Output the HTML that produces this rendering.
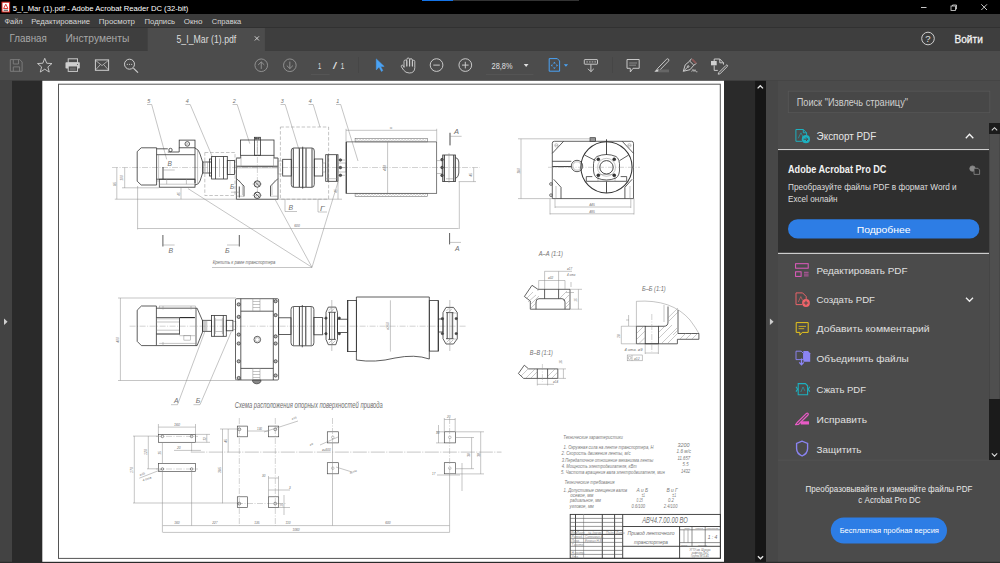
<!DOCTYPE html><html><head><meta charset="utf-8"><style>*{margin:0;padding:0}html,body{width:1000px;height:563px;overflow:hidden;background:#282828}</style></head><body><svg width="1000" height="563" viewBox="0 0 1000 563" style="position:absolute;left:0;top:0;font-family:'Liberation Sans',sans-serif"><rect x="0" y="0" width="1000" height="14" fill="#000" /><rect x="422" y="0" width="31" height="1" fill="#1473e6" /><rect x="453" y="0" width="126" height="1" fill="#333" /><rect x="0" y="14" width="1000" height="13" fill="#3b3b3b" /><rect x="0" y="27" width="1000" height="1" fill="#313131" /><rect x="0" y="28" width="1000" height="22.6" fill="#3e3e3e" /><rect x="0" y="50.6" width="1000" height="30.2" fill="#4c4c4c" /><rect x="147.7" y="28" width="117.2" height="23" fill="#4c4c4c" /><rect x="0" y="80.8" width="12" height="483" fill="#434343" /><rect x="12" y="80.8" width="30.3" height="483" fill="#2a2a2a" /><rect x="42.3" y="80.8" width="681.8" height="481.2" fill="#fff" /><rect x="724.1" y="80.8" width="31" height="483" fill="#2a2a2a" /><rect x="755.2" y="80.8" width="10.8" height="483" fill="#161616" /><rect x="766" y="80.8" width="12" height="483" fill="#474747" /><rect x="777.7" y="80.8" width="222.3" height="483" fill="#4b4b4b" /><g><rect x="2" y="2.2" width="7.6" height="9.8" fill="#fff" stroke="#d9271e" stroke-width="1"/><path d="M3.6 8.5 L5.8 4.2 L7.9 8.5 Z" fill="none" stroke="#d9271e" stroke-width="0.9"/><rect x="3.6" y="9.6" width="4.4" height="1.5" fill="#777"/></g><text x="12.8" y="10.7" font-size="8.1" fill="#fff" font-weight="400" text-anchor="start" textLength="175.5" lengthAdjust="spacingAndGlyphs">5_I_Mar (1).pdf - Adobe Acrobat Reader DC (32-bit)</text><path d="M921 7.5H926.5" stroke="#ddd" stroke-width="0.9"/><rect x="951" y="6" width="4.5" height="4.5" fill="none" stroke="#ddd" stroke-width="0.8"/><path d="M952.5 6V5H956.5V9H955.5" fill="none" stroke="#ddd" stroke-width="0.8"/><path d="M981.3 4.3L987 10M987 4.3L981.3 10" stroke="#ddd" stroke-width="0.9"/><text x="4.5" y="24" font-size="7.9" fill="#d6d6d6" font-weight="400" text-anchor="start" textLength="18.0" lengthAdjust="spacingAndGlyphs">Файл</text><text x="31.3" y="24" font-size="7.9" fill="#d6d6d6" font-weight="400" text-anchor="start" textLength="58.7" lengthAdjust="spacingAndGlyphs">Редактирование</text><text x="98.8" y="24" font-size="7.9" fill="#d6d6d6" font-weight="400" text-anchor="start" textLength="36.2" lengthAdjust="spacingAndGlyphs">Просмотр</text><text x="144.5" y="24" font-size="7.9" fill="#d6d6d6" font-weight="400" text-anchor="start" textLength="30.5" lengthAdjust="spacingAndGlyphs">Подпись</text><text x="183.8" y="24" font-size="7.9" fill="#d6d6d6" font-weight="400" text-anchor="start" textLength="18.7" lengthAdjust="spacingAndGlyphs">Окно</text><text x="211.8" y="24" font-size="7.9" fill="#d6d6d6" font-weight="400" text-anchor="start" textLength="29.5" lengthAdjust="spacingAndGlyphs">Справка</text><text x="9.5" y="42" font-size="11" fill="#a8a8a8" font-weight="400" text-anchor="start" textLength="37.3" lengthAdjust="spacingAndGlyphs">Главная</text><text x="65.5" y="42" font-size="11" fill="#a8a8a8" font-weight="400" text-anchor="start" textLength="63.8" lengthAdjust="spacingAndGlyphs">Инструменты</text><text x="176.5" y="42.8" font-size="10.9" fill="#dcdcdc" font-weight="400" text-anchor="start" textLength="59.8" lengthAdjust="spacingAndGlyphs">5_I_Mar (1).pdf</text><path d="M254.8 36.3L259 40.5M259 36.3L254.8 40.5" stroke="#ddd" stroke-width="0.9"/><circle cx="928" cy="38.5" r="6.3" fill="none" stroke="#ddd" stroke-width="0.9"/><text x="928" y="42" font-size="9.5" fill="#e0e0e0" font-weight="400" text-anchor="middle">?</text><text x="954.5" y="43" font-size="10.9" fill="#f2f2f2" stroke="#f2f2f2" stroke-width="0.3" textLength="28.3" lengthAdjust="spacingAndGlyphs">Войти</text><g fill="none" stroke="#7d7d7d" stroke-width="0.95"><path d="M10.3 59.6H19.8L22.1 62V71.3H10.3Z"/><path d="M13.3 59.6V64H18.5V59.6"/><path d="M13.3 71.3V66.9H19.6V71.3"/></g><polygon points="44.75,58.30 46.69,63.23 51.98,63.55 47.89,66.92 49.22,72.05 44.75,69.20 40.28,72.05 41.61,66.92 37.52,63.55 42.81,63.23" fill="none" stroke="#cfcfcf" stroke-width="0.9" stroke-linejoin="round"/><g fill="none" stroke="#cfcfcf" stroke-width="0.95"><rect x="68.2" y="58.8" width="9.3" height="4.2"/><rect x="65.5" y="62.3" width="14.3" height="6.3" fill="#cfcfcf" stroke="none" rx="0.8"/><rect x="68.2" y="66" width="9.3" height="5.4" fill="#4a4a4a"/><path d="M70 68.2H75.8M70 69.8H75.8" stroke-width="0.6" stroke="#999"/></g><circle cx="77.5" cy="64.4" r="0.5" fill="#4a4a4a"/><g fill="none" stroke="#cfcfcf" stroke-width="1"><rect x="95.4" y="59.9" width="13.2" height="10.4"/><path d="M95.6 60.4L102 65.6L108.4 60.4M95.6 69.9L100.4 64.5M108.4 69.9L103.6 64.5" stroke-width="0.7"/></g><g fill="none" stroke="#cfcfcf" stroke-width="1"><circle cx="129.5" cy="64.2" r="5"/><path d="M133.4 68.1L138 72.6" stroke-width="1.2"/></g><g fill="#cfcfcf"><circle cx="127.3" cy="64.3" r="0.6"/><circle cx="129.5" cy="64.3" r="0.6"/><circle cx="131.7" cy="64.3" r="0.6"/></g><g fill="none" stroke="#9c9c9c" stroke-width="0.85"><circle cx="261.25" cy="65.25" r="6.3"/><path d="M261.25 68.9V62M258.2 64.9L261.25 61.9L264.3 64.9"/><circle cx="289.85" cy="65.25" r="6.3"/><path d="M289.85 61.6V68.5M286.8 65.6L289.85 68.6L292.9 65.6"/></g><text x="318" y="69" font-size="8.2" fill="#e0e0e0" font-weight="400" text-anchor="start" textLength="3.2" lengthAdjust="spacingAndGlyphs">1</text><text x="332.8" y="69" font-size="8.2" fill="#e0e0e0" font-weight="400" text-anchor="start" textLength="4.3" lengthAdjust="spacingAndGlyphs">/</text><text x="340.8" y="69" font-size="8.2" fill="#e0e0e0" font-weight="400" text-anchor="start" textLength="3.5" lengthAdjust="spacingAndGlyphs">1</text><rect x="311" y="74" width="18.6" height="0.6" fill="#5c5c5c"/><rect x="358" y="57" width="0.7" height="16" fill="#444"/><path d="M376.3 58.9L376.3 69.9L379 67L381.5 71.5L382.8 70.6L380.6 66.4L384.2 66.4Z" fill="#4aa3f5" stroke="#4aa3f5" stroke-width="0.5" stroke-linejoin="round"/><g fill="none" stroke="#cfcfcf" stroke-width="0.9" stroke-linejoin="round" stroke-linecap="round"><path d="M404 67V61.5Q404 60 405.4 60Q406.8 60 406.8 61.5V66M406.8 66V59.5Q406.8 58 408.2 58Q409.6 58 409.6 59.5V66M409.6 66V60Q409.6 58.7 411 58.7Q412.4 58.7 412.4 60V66M412.4 66V61.5Q412.4 60.3 413.6 60.3Q414.8 60.3 414.8 61.5V67.5Q414.8 73 409.3 73Q405.6 73 403.5 70L401.4 66.8Q400.8 65.6 401.8 65.2Q402.8 64.9 403.6 66L404 67"/></g><g fill="none" stroke="#cfcfcf" stroke-width="0.95"><circle cx="436.55" cy="65.07" r="6.35"/><path d="M433.3 65.1H439.8"/><circle cx="465.3" cy="65.07" r="6.35"/><path d="M462 65.1H468.6M465.3 61.8V68.4"/></g><text x="491.6" y="69" font-size="8.3" fill="#e0e0e0" font-weight="400" text-anchor="start" textLength="20.9" lengthAdjust="spacingAndGlyphs">28,8%</text><path d="M523.8 64.1H528.5L526.15 66.9Z" fill="#e0e0e0"/><rect x="486" y="74" width="47.4" height="0.6" fill="#5a5a5a"/><g fill="none" stroke="#4aa3f5" stroke-width="1"><path d="M549.2 58.6H557.3L559.6 61V71.2H549.2Z"/></g><g fill="#4aa3f5"><path d="M554.4 61.8L555.8 63.4H553Z"/><path d="M554.4 69L555.8 67.4H553Z"/><path d="M550.8 65.4L552.4 64V66.8Z"/><path d="M558 65.4L556.4 64V66.8Z"/></g><path d="M563.8 64.2H568.1L565.95 66.8Z" fill="#4aa3f5"/><g fill="none" stroke="#cfcfcf" stroke-width="0.95"><rect x="584.3" y="59.6" width="13.2" height="4.6" rx="0.5"/><path d="M590.9 64.5V71.5M588 68.8L590.9 71.7L593.8 68.8"/></g><g fill="#9a9a9a"><rect x="586.3" y="61.2" width="1.6" height="1.4"/><rect x="589" y="61.2" width="1.6" height="1.4"/><rect x="591.7" y="61.2" width="1.6" height="1.4"/><rect x="594.4" y="61.2" width="1.6" height="1.4"/></g><rect x="612" y="57" width="0.7" height="16" fill="#444"/><g fill="none" stroke="#cfcfcf" stroke-width="0.95" stroke-linejoin="round"><path d="M627 59.5H639.2V68.3H633L630.3 72V68.3H627Z"/><path d="M629.2 63H637M629.2 65.2H636" stroke="#9a9a9a" stroke-width="0.8"/></g><g fill="none" stroke="#cfcfcf" stroke-width="0.95" stroke-linejoin="round"><path d="M657.3 68.8L666.6 59.2Q667.6 58.3 668.5 59.2Q669.4 60.1 668.5 61.1L659.3 70.6Z"/></g><path d="M656.8 69L659.2 71.3L657.4 71.8H654.4Z" fill="#cfcfcf"/><rect x="658.5" y="69.5" width="10.5" height="2.8" fill="#666"/><g fill="none" stroke="#cfcfcf" stroke-width="0.95" stroke-linejoin="round"><path d="M683.3 71.3L685.2 64.9L689.7 61.1L693.8 65.2L690 69.7Z"/><path d="M689.7 61.1L691.4 58.6M693.8 65.2L696.5 63.3M683.5 71.2L687.7 67"/><circle cx="688.2" cy="66.5" r="0.8"/></g><path d="M691.5 60L692.8 58.4L696.6 62.6L695.2 63.8Z" fill="#8a5555"/><path d="M691.6 71.8L693 69.3L694 71.5L695 69.6L696 71.8H697.5" fill="none" stroke="#cfcfcf" stroke-width="0.7"/><g fill="none" stroke="#cfcfcf" stroke-width="0.95" stroke-linejoin="round"><path d="M714.2 61.2V59H719.8L723.5 62.8V64.6M714.2 65.4V70.4H717.8"/><path d="M719.8 59V62.8H723.5"/><path d="M718.6 72.8L726 65.4Q726.8 64.6 727.4 65.2Q728 65.8 727.2 66.6L719.9 73.9L718.2 74.2Z"/></g><rect x="711" y="61" width="5.7" height="4.3" fill="#cfcfcf"/><rect x="788.3" y="91.2" width="201.5" height="21.5" fill="#474747" stroke="#585858" stroke-width="0.8"/><text x="796.7" y="106.1" font-size="10.3" fill="#cfcfcf" font-weight="400" text-anchor="start" textLength="111.3" lengthAdjust="spacingAndGlyphs">Поиск &quot;Извлечь страницу&quot;</text><g fill="none" stroke="#1db0bf" stroke-width="1"><path d="M795.9 129.5H803.3L806.6 132.8V135.6M803.3 129.5V132.8H806.6M802 141.3H795.9V129.5"/><path d="M798.2 138.3L801 132.8L803.2 137.2" stroke-width="0.6"/></g><circle cx="805.9" cy="139.2" r="4.1" fill="#1db0bf"/><path d="M803.6 139.2H807.6M806 137.4L807.8 139.2L806 141" fill="none" stroke="#4a4a4a" stroke-width="1"/><text x="816.6" y="139.8" font-size="11.3" fill="#e6e6e6" font-weight="400" text-anchor="start" textLength="59.7" lengthAdjust="spacingAndGlyphs">Экспорт PDF</text><path d="M965.8 138.3L969.5 134.3L973.3 138.3" fill="none" stroke="#f4f4f4" stroke-width="1.3"/><rect x="778" y="149" width="211" height="1.2" fill="#cfcfcf" /><rect x="778" y="150.2" width="211" height="103" fill="#2f2f2f" /><text x="788" y="172.9" font-size="10.6" fill="#f2f2f2" font-weight="700" text-anchor="start" textLength="98.4" lengthAdjust="spacingAndGlyphs">Adobe Acrobat Pro DC</text><g fill="none" stroke="#8a8a8a" stroke-width="0.8"><circle cx="972.5" cy="168.6" r="2.7" fill="#8a8a8a"/><path d="M974 168.3H978L979.6 170V174.4H974Z" fill="#2e2e2e"/></g><text x="788" y="190.3" font-size="9" fill="#dedede" font-weight="400" text-anchor="start" textLength="168.7" lengthAdjust="spacingAndGlyphs">Преобразуйте файлы PDF в формат Word и</text><text x="788" y="201.5" font-size="9" fill="#dedede" font-weight="400" text-anchor="start" textLength="49.5" lengthAdjust="spacingAndGlyphs">Excel онлайн</text><rect x="788" y="219.3" width="191.4" height="19.2" rx="9.6" fill="#2d7de5"/><text x="856.7" y="232.5" font-size="9.6" fill="#fff" font-weight="400" text-anchor="start" textLength="53.9" lengthAdjust="spacingAndGlyphs">Подробнее</text><rect x="778" y="252.8" width="211" height="1.2" fill="#cdcdcd" /><text x="816.6" y="274.4" font-size="9.7" fill="#e0e0e0" font-weight="400" text-anchor="start" textLength="90.9" lengthAdjust="spacingAndGlyphs">Редактировать PDF</text><text x="816.6" y="303.09999999999997" font-size="9.7" fill="#e0e0e0" font-weight="400" text-anchor="start" textLength="58.4" lengthAdjust="spacingAndGlyphs">Создать PDF</text><text x="816.6" y="332.4" font-size="9.7" fill="#e0e0e0" font-weight="400" text-anchor="start" textLength="113.0" lengthAdjust="spacingAndGlyphs">Добавить комментарий</text><text x="816.6" y="362.4" font-size="9.7" fill="#e0e0e0" font-weight="400" text-anchor="start" textLength="92.1" lengthAdjust="spacingAndGlyphs">Объединить файлы</text><text x="816.6" y="393.0" font-size="9.7" fill="#e0e0e0" font-weight="400" text-anchor="start" textLength="49.4" lengthAdjust="spacingAndGlyphs">Сжать PDF</text><text x="816.6" y="423.0" font-size="9.7" fill="#e0e0e0" font-weight="400" text-anchor="start" textLength="50.4" lengthAdjust="spacingAndGlyphs">Исправить</text><text x="816.6" y="452.9" font-size="9.7" fill="#e0e0e0" font-weight="400" text-anchor="start" textLength="44.9" lengthAdjust="spacingAndGlyphs">Защитить</text><g fill="none" stroke="#e85bc5" stroke-width="0.95"><rect x="795.6" y="263.7" width="12.6" height="4.5"/><rect x="795.6" y="271.8" width="5.5" height="4.6"/><path d="M804 272.3H808.6M804 274.1H808.6M804 275.9H808.6" stroke-width="0.7"/></g><g fill="none" stroke="#f0646a" stroke-width="0.95"><path d="M802 304.6H796V292.9H802.6L806.2 296.5V299"/><path d="M798.3 302L800.8 296.6L802.6 300.4" stroke-width="0.6"/></g><circle cx="806" cy="303" r="3.9" fill="#f0646a"/><path d="M803.8 303H808.2M806 300.8V305.2" stroke="#4a4a4a" stroke-width="1"/><path d="M966 297.7L969.5 301.3L973 297.7" fill="none" stroke="#eeeeee" stroke-width="1.3"/><g fill="none" stroke="#e8c51c" stroke-width="1" stroke-linejoin="round"><path d="M796.2 322.6H808.2V332.4H802.2L799.9 335.2V332.4H796.2Z"/><path d="M798.6 326.4H806M798.6 328.7H804.2" stroke-width="0.8"/></g><g><path d="M796 351.2H801.2L803.6 353.6V359.6H796Z" fill="none" stroke="#8b84f3" stroke-width="0.95"/><path d="M803.4 351H808L810.2 353.2V361.8H803.4Z" fill="#8b84f3"/><path d="M801.5 358.4V364.6M799.2 362.4L801.5 364.8L803.8 362.4" fill="none" stroke="#8b84f3" stroke-width="1.3"/></g><g fill="none" stroke="#1db0bf" stroke-width="1.1"><path d="M798.2 383.6H805.4L807.6 385.8V394.8H798.2Z"/><path d="M796 386.8L797.6 389.2L796 391.6M809.8 386.8L808.2 389.2L809.8 391.6"/><path d="M800.8 392L803 387L804.8 390.8" stroke-width="0.6"/></g><g fill="none" stroke="#e85bc5" stroke-width="1.25" stroke-linejoin="round"><path d="M797 422.8L806.2 413.6Q807.2 412.6 808 413.4Q808.8 414.2 807.8 415.2L798.6 424.3L795.6 424.6Z"/></g><rect x="800.8" y="421.3" width="8.2" height="3.2" fill="#e85bc5"/><path d="M802.1 441.2L796.6 443.4V448.6Q796.8 453.8 802.1 456Q807.4 453.8 807.6 448.6V443.4Z" fill="none" stroke="#8b84f3" stroke-width="1.35"/><rect x="778" y="459.7" width="211" height="0.8" fill="#555" /><rect x="989" y="123" width="11" height="337" fill="#4f4f4f" /><rect x="989" y="134" width="0.8" height="265" fill="#434343" /><rect x="999.2" y="134" width="0.8" height="265" fill="#454545" /><rect x="989" y="123" width="11" height="11" fill="#1b1b1b" /><path d="M991.8 130.4L994.5 127.7L997.2 130.4" fill="none" stroke="#d8d8d8" stroke-width="1.1"/><rect x="989" y="399" width="11" height="61" fill="#1b1b1b" /><path d="M991.8 453.4L994.5 456.1L997.2 453.4" fill="none" stroke="#d8d8d8" stroke-width="1.1"/><text x="889" y="492" font-size="8.3" fill="#e8e8e8" font-weight="400" text-anchor="middle" textLength="166.9" lengthAdjust="spacingAndGlyphs">Преобразовывайте и изменяйте файлы PDF</text><text x="889.5" y="502.5" font-size="8.3" fill="#e8e8e8" font-weight="400" text-anchor="middle" textLength="62.3" lengthAdjust="spacingAndGlyphs">с Acrobat Pro DC</text><rect x="830.8" y="517.5" width="116.2" height="26" rx="13" fill="#2d7de5"/><text x="889.3" y="533.4" font-size="8" fill="#fff" font-weight="400" text-anchor="middle" textLength="99.3" lengthAdjust="spacingAndGlyphs">Бесплатная пробная версия</text><path d="M4 318.6L7.6 321.8L4 325Z" fill="#cfcfcf"/><path d="M769.9 318.6L773.6 321.8L769.9 325Z" fill="#cfcfcf"/><path d="M757.6 88.4L760.3 85.7L763 88.4" fill="none" stroke="#e8e8e8" stroke-width="1.3"/><path d="M757.9 556.2L760.5 558.8L763.1 556.2" fill="none" stroke="#e8e8e8" stroke-width="1.3"/><rect x="0" y="561.8" width="1000" height="1.2" fill="#2b2b2b" /><g font-family="Liberation Sans, sans-serif"><rect x="58.50" y="84.20" width="661.80" height="474.20" stroke="#555" stroke-width="1" fill="none" /><path d="M112.00 167.50 L480.00 167.50" stroke="#9a9a9a" stroke-width="0.45" fill="none" stroke-dasharray="6 1.5 1 1.5"/><text x="147.2" y="102.8" font-size="6.2" fill="#6e6e6e" text-anchor="start" font-style="italic" textLength="3" lengthAdjust="spacingAndGlyphs">5</text><path d="M147.00 104.50 L151.70 104.50 L166.70 159.40" stroke="#8a8a8a" stroke-width="0.5" fill="none"/><text x="185.7" y="102.8" font-size="6.2" fill="#6e6e6e" text-anchor="start" font-style="italic" textLength="3" lengthAdjust="spacingAndGlyphs">4</text><path d="M185.50 104.50 L190.20 104.50 L212.60 157.40" stroke="#8a8a8a" stroke-width="0.5" fill="none"/><text x="232.7" y="102.8" font-size="6.2" fill="#6e6e6e" text-anchor="start" font-style="italic" textLength="3" lengthAdjust="spacingAndGlyphs">2</text><path d="M232.50 104.50 L237.20 104.50 L249.80 143.70" stroke="#8a8a8a" stroke-width="0.5" fill="none"/><text x="280.7" y="102.8" font-size="6.2" fill="#6e6e6e" text-anchor="start" font-style="italic" textLength="3" lengthAdjust="spacingAndGlyphs">3</text><path d="M280.50 104.50 L285.20 104.50 L298.60 148.60" stroke="#8a8a8a" stroke-width="0.5" fill="none"/><text x="308.7" y="102.8" font-size="6.2" fill="#6e6e6e" text-anchor="start" font-style="italic" textLength="3" lengthAdjust="spacingAndGlyphs">4</text><path d="M308.50 104.50 L313.20 104.50 L320.00 127.00" stroke="#8a8a8a" stroke-width="0.5" fill="none"/><text x="336.2" y="102.8" font-size="6.2" fill="#6e6e6e" text-anchor="start" font-style="italic" textLength="3" lengthAdjust="spacingAndGlyphs">1</text><path d="M336.00 104.50 L340.70 104.50 L358.00 161.00" stroke="#8a8a8a" stroke-width="0.5" fill="none"/><path d="M156.6 147.8H141.2L137.2 151.6V181.2L141.2 185H156.6Z" stroke="#353535" stroke-width="0.8" fill="none"/><path d="M156.60 154.70 L195.00 154.70" stroke="#353535" stroke-width="0.8" fill="none"/><path d="M156.60 179.20 L195.00 179.20" stroke="#353535" stroke-width="0.8" fill="none"/><path d="M195.00 148.00 L195.00 183.00" stroke="#353535" stroke-width="0.8" fill="none"/><path d="M156.60 148.80 L167.80 148.80" stroke="#353535" stroke-width="0.8" fill="none"/><path d="M167.80 152.00 L179.20 152.00" stroke="#353535" stroke-width="0.8" fill="none"/><path d="M179.20 147.80 L179.20 152.00" stroke="#353535" stroke-width="0.8" fill="none"/><rect x="179.20" y="140.10" width="15.80" height="7.70" stroke="#353535" stroke-width="0.8" fill="none" /><circle cx="187.30" cy="143.90" r="2.30" stroke="#353535" stroke-width="0.8" fill="none"/><path d="M185.80 142.40 L188.80 145.40" stroke="#8a8a8a" stroke-width="0.5" fill="none"/><path d="M188.80 142.40 L185.80 145.40" stroke="#8a8a8a" stroke-width="0.5" fill="none"/><circle cx="170.50" cy="150.00" r="1.70" stroke="#353535" stroke-width="0.8" fill="none"/><path d="M158.60 154.70 L158.60 179.20" stroke="#8a8a8a" stroke-width="0.5" fill="none"/><rect x="159.30" y="179.20" width="35.70" height="8.00" stroke="#353535" stroke-width="0.8" fill="none" /><path d="M166.70 179.20 L166.70 184.20" stroke="#8a8a8a" stroke-width="0.5" fill="none"/><path d="M186.40 179.20 L186.40 184.20" stroke="#8a8a8a" stroke-width="0.5" fill="none"/><path d="M159.30 184.20 L195.00 184.20" stroke="#8a8a8a" stroke-width="0.5" fill="none"/><path d="M156.60 181.00 L159.30 181.00" stroke="#8a8a8a" stroke-width="0.5" fill="none"/><path d="M195 148Q199 149.5 200 154L202.8 162.5V172.5L200 181Q199 184.5 195 185" stroke="#353535" stroke-width="0.8" fill="none"/><path d="M197.60 150.00 L197.60 183.00" stroke="#8a8a8a" stroke-width="0.5" fill="none"/><rect x="202.80" y="162.00" width="8.80" height="11.00" stroke="#353535" stroke-width="0.8" fill="none" /><path d="M205.00 162.00 L205.00 173.00" stroke="#8a8a8a" stroke-width="0.5" fill="none"/><path d="M207.50 162.00 L207.50 173.00" stroke="#8a8a8a" stroke-width="0.5" fill="none"/><text x="167.6" y="166.4" font-size="6.5" fill="#6e6e6e" text-anchor="start" font-style="italic" textLength="4.4" lengthAdjust="spacingAndGlyphs">В</text><path d="M163.00 167.00 L163.00 179.20" stroke="#333" stroke-width="0.9" fill="none"/><path d="M163.00 170.00 L174.70 170.00" stroke="#8a8a8a" stroke-width="0.5" fill="none"/><rect x="204.80" y="152.50" width="30.20" height="43.00" stroke="#8a8a8a" stroke-width="0.5" fill="none" stroke-dasharray="3.5 1.8" /><rect x="211.60" y="156.50" width="15.70" height="22.50" stroke="#353535" stroke-width="0.8" fill="none" /><path d="M215.50 156.50 L215.50 179.00" stroke="#353535" stroke-width="0.8" fill="none"/><path d="M219.50 158.50 L219.50 177.00" stroke="#8a8a8a" stroke-width="0.5" fill="none"/><path d="M223.50 156.50 L223.50 179.00" stroke="#353535" stroke-width="0.8" fill="none"/><rect x="227.30" y="160.50" width="7.20" height="14.00" stroke="#353535" stroke-width="0.8" fill="none" /><path d="M230.00 160.50 L230.00 174.50" stroke="#8a8a8a" stroke-width="0.5" fill="none"/><rect x="209.50" y="159.00" width="2.10" height="17.00" stroke="#353535" stroke-width="0.8" fill="none" /><rect x="240.40" y="140.00" width="33.60" height="15.30" stroke="#353535" stroke-width="0.8" fill="none" /><rect x="254.40" y="137.30" width="6.00" height="18.00" stroke="#353535" stroke-width="0.8" fill="none" /><rect x="255.00" y="137.30" width="4.60" height="2.30" fill="#555" /><path d="M257.40 140.00 L257.40 155.00" stroke="#8a8a8a" stroke-width="0.5" fill="none"/><path d="M240.7 155.3V158H236.4V199.3H278V158H274V155.3" stroke="#353535" stroke-width="0.8" fill="none"/><path d="M236.40 166.30 L278.00 166.30" stroke="#333" stroke-width="1.1" fill="none"/><path d="M236.40 167.80 L278.00 167.80" stroke="#8a8a8a" stroke-width="0.5" fill="none"/><rect x="236.40" y="158.00" width="4.60" height="8.30" stroke="#8a8a8a" stroke-width="0.5" fill="none" /><rect x="273.40" y="158.00" width="4.60" height="8.30" stroke="#8a8a8a" stroke-width="0.5" fill="none" /><path d="M236.6 178.7L244 186V196.4" stroke="#353535" stroke-width="0.8" fill="none"/><path d="M277.8 178.7L270.5 186V196.4" stroke="#353535" stroke-width="0.8" fill="none"/><path d="M236.40 196.20 L244.00 196.20" stroke="#8a8a8a" stroke-width="0.5" fill="none"/><path d="M270.50 196.20 L278.00 196.20" stroke="#8a8a8a" stroke-width="0.5" fill="none"/><path d="M239 180L242.4 185V195" stroke="#8a8a8a" stroke-width="0.5" fill="none"/><path d="M275.4 180L272 185V195" stroke="#8a8a8a" stroke-width="0.5" fill="none"/><path d="M257.40 137.00 L257.40 200.00" stroke="#9a9a9a" stroke-width="0.45" fill="none" stroke-dasharray="6 1.5 1 1.5"/><circle cx="257.30" cy="184.00" r="3.20" stroke="#333" stroke-width="0.9" fill="none"/><circle cx="257.30" cy="195.30" r="3.20" stroke="#333" stroke-width="0.9" fill="none"/><path d="M255.20 181.90 L259.40 186.10" stroke="#353535" stroke-width="0.8" fill="none"/><path d="M259.40 181.90 L255.20 186.10" stroke="#8a8a8a" stroke-width="0.5" fill="none"/><path d="M255.20 193.20 L259.40 197.40" stroke="#353535" stroke-width="0.8" fill="none"/><path d="M259.40 193.20 L255.20 197.40" stroke="#8a8a8a" stroke-width="0.5" fill="none"/><path d="M252.50 184.00 L262.00 184.00" stroke="#8a8a8a" stroke-width="0.5" fill="none"/><path d="M252.50 195.30 L262.00 195.30" stroke="#8a8a8a" stroke-width="0.5" fill="none"/><text x="230" y="188.5" font-size="6.5" fill="#6e6e6e" text-anchor="start" font-style="italic" textLength="4.2" lengthAdjust="spacingAndGlyphs">Б</text><path d="M239.30 186.50 L239.30 197.50" stroke="#333" stroke-width="0.9" fill="none"/><path d="M231.00 192.20 L239.30 192.20" stroke="#8a8a8a" stroke-width="0.5" fill="none"/><rect x="278.00" y="161.00" width="4.70" height="13.00" stroke="#8a8a8a" stroke-width="0.5" fill="none" /><rect x="282.70" y="159.30" width="8.60" height="16.70" stroke="#353535" stroke-width="0.8" fill="none" /><path d="M293.5 148H312Q314.3 148 314.3 151V184.3Q314.3 187.3 312 187.3H293.5Q291.3 187.3 291.3 184.3V151Q291.3 148 293.5 148Z" stroke="#353535" stroke-width="0.8" fill="none"/><path d="M293.30 148.30 L293.30 187.00" stroke="#333" stroke-width="0.9" fill="none"/><path d="M299.30 148.30 L299.30 187.00" stroke="#333" stroke-width="1.0" fill="none"/><path d="M302.70 148.30 L302.70 187.00" stroke="#333" stroke-width="0.6" fill="none"/><path d="M306.00 148.30 L306.00 187.00" stroke="#333" stroke-width="1.0" fill="none"/><path d="M312.00 148.30 L312.00 187.00" stroke="#333" stroke-width="0.9" fill="none"/><path d="M302.70 146.70 L302.70 188.70" stroke="#353535" stroke-width="0.8" fill="none"/><rect x="314.30" y="159.00" width="8.40" height="17.00" stroke="#353535" stroke-width="0.8" fill="none" /><rect x="322.70" y="163.00" width="3.00" height="9.00" stroke="#8a8a8a" stroke-width="0.5" fill="none" /><rect x="280.40" y="127.00" width="48.20" height="72.20" stroke="#8a8a8a" stroke-width="0.5" fill="none" stroke-dasharray="3.5 1.8" /><rect x="325.70" y="154.70" width="12.30" height="26.60" stroke="#353535" stroke-width="0.8" fill="none" /><path d="M328.00 155.00 L328.00 181.00" stroke="#333" stroke-width="1.1" fill="none"/><path d="M336.70 155.00 L336.70 181.00" stroke="#333" stroke-width="1.1" fill="none"/><path d="M325.70 178.70 L338.00 178.70" stroke="#8a8a8a" stroke-width="0.5" fill="none"/><path d="M338.00 160.00 L345.00 160.00" stroke="#8a8a8a" stroke-width="0.5" fill="none"/><circle cx="340.40" cy="160.00" r="1.30" stroke="#333" stroke-width="0.6" fill="#555"/><path d="M338.00 167.60 L345.00 167.60" stroke="#8a8a8a" stroke-width="0.5" fill="none"/><circle cx="340.40" cy="167.60" r="1.30" stroke="#333" stroke-width="0.6" fill="#555"/><path d="M338.00 175.30 L345.00 175.30" stroke="#8a8a8a" stroke-width="0.5" fill="none"/><circle cx="340.40" cy="175.30" r="1.30" stroke="#333" stroke-width="0.6" fill="#555"/><rect x="338.00" y="163.00" width="8.00" height="9.00" stroke="#8a8a8a" stroke-width="0.5" fill="none" /><rect x="346.00" y="141.90" width="90.70" height="51.40" stroke="#444" stroke-width="0.7" fill="none" /><path d="M346.40 141.90 L346.40 193.30" stroke="#333" stroke-width="0.9" fill="none"/><rect x="355.10" y="138.40" width="72.50" height="3.50" stroke="#666" stroke-width="0.55" fill="none" /><rect x="355.10" y="193.30" width="72.50" height="3.00" stroke="#666" stroke-width="0.55" fill="none" /><path d="M355.60 141.20L357.10 139.20L358.60 141.20L360.10 139.20L361.60 141.20L363.10 139.20L364.60 141.20L366.10 139.20L367.60 141.20L369.10 139.20L370.60 141.20L372.10 139.20L373.60 141.20L375.10 139.20L376.60 141.20L378.10 139.20L379.60 141.20L381.10 139.20L382.60 141.20L384.10 139.20L385.60 141.20L387.10 139.20L388.60 141.20L390.10 139.20L391.60 141.20L393.10 139.20L394.60 141.20L396.10 139.20L397.60 141.20L399.10 139.20L400.60 141.20L402.10 139.20L403.60 141.20L405.10 139.20L406.60 141.20L408.10 139.20L409.60 141.20L411.10 139.20L412.60 141.20L414.10 139.20L415.60 141.20L417.10 139.20L418.60 141.20L420.10 139.20L421.60 141.20L423.10 139.20L424.60 141.20L426.10 139.20" stroke="#999" stroke-width="0.4" fill="none"/><path d="M355.60 195.60L357.10 194.00L358.60 195.60L360.10 194.00L361.60 195.60L363.10 194.00L364.60 195.60L366.10 194.00L367.60 195.60L369.10 194.00L370.60 195.60L372.10 194.00L373.60 195.60L375.10 194.00L376.60 195.60L378.10 194.00L379.60 195.60L381.10 194.00L382.60 195.60L384.10 194.00L385.60 195.60L387.10 194.00L388.60 195.60L390.10 194.00L391.60 195.60L393.10 194.00L394.60 195.60L396.10 194.00L397.60 195.60L399.10 194.00L400.60 195.60L402.10 194.00L403.60 195.60L405.10 194.00L406.60 195.60L408.10 194.00L409.60 195.60L411.10 194.00L412.60 195.60L414.10 194.00L415.60 195.60L417.10 194.00L418.60 195.60L420.10 194.00L421.60 195.60L423.10 194.00L424.60 195.60L426.10 194.00" stroke="#999" stroke-width="0.4" fill="none"/><path d="M346.00 141.00 L346.00 128.80" stroke="#8a8a8a" stroke-width="0.5" fill="none"/><path d="M436.70 141.00 L436.70 128.80" stroke="#8a8a8a" stroke-width="0.5" fill="none"/><path d="M346.00 130.30 L436.70 130.30" stroke="#8a8a8a" stroke-width="0.5" fill="none"/><text x="391" y="129.3" font-size="3.5" fill="#6e6e6e" text-anchor="middle" font-style="normal">∞</text><path d="M387.60 141.90 L387.60 193.30" stroke="#8a8a8a" stroke-width="0.5" fill="none"/><text x="386.3" y="168" font-size="3.5" fill="#6e6e6e" text-anchor="middle" font-style="italic" transform="rotate(-90 386.3 168)">400</text><rect x="436.70" y="160.80" width="5.30" height="12.80" stroke="#8a8a8a" stroke-width="0.5" fill="none" /><rect x="442.70" y="155.00" width="12.80" height="26.60" stroke="#353535" stroke-width="0.8" fill="none" /><path d="M444.30 155.00 L444.30 181.60" stroke="#333" stroke-width="1.1" fill="none"/><path d="M453.80 155.00 L453.80 181.60" stroke="#333" stroke-width="1.1" fill="none"/><path d="M446.00 178.80 L453.00 178.80" stroke="#8a8a8a" stroke-width="0.5" fill="none"/><path d="M455.5 157.5Q458.8 158.5 458.8 162V173Q458.8 177 455.5 178.5" stroke="#353535" stroke-width="0.8" fill="none"/><path d="M449.00 153.00 L449.00 183.00" stroke="#8a8a8a" stroke-width="0.5" fill="none"/><circle cx="442.00" cy="159.60" r="1.30" stroke="#333" stroke-width="0.6" fill="#555"/><circle cx="442.00" cy="167.50" r="1.30" stroke="#333" stroke-width="0.6" fill="#555"/><circle cx="442.00" cy="175.40" r="1.30" stroke="#333" stroke-width="0.6" fill="#555"/><path d="M450.00 132.80 L450.00 145.40" stroke="#333" stroke-width="0.9" fill="none"/><path d="M450.00 136.30 L461.60 136.30" stroke="#8a8a8a" stroke-width="0.5" fill="none"/><text x="454" y="134.4" font-size="6.5" fill="#6e6e6e" text-anchor="start" font-style="italic" textLength="5" lengthAdjust="spacingAndGlyphs">А</text><path d="M459.30 181.60 L459.30 229.00" stroke="#8a8a8a" stroke-width="0.5" fill="none"/><path d="M458.60 181.60 L476.00 181.60" stroke="#8a8a8a" stroke-width="0.5" fill="none"/><path d="M473.70 167.50 L473.70 181.60" stroke="#8a8a8a" stroke-width="0.5" fill="none"/><text x="472.4" y="175" font-size="3.3" fill="#6e6e6e" text-anchor="middle" font-style="italic" transform="rotate(-90 472.4 175)">45</text><path d="M114.80 199.20 L342.00 199.20" stroke="#8a8a8a" stroke-width="0.5" fill="none"/><path d="M116.80 167.50 L116.80 199.20" stroke="#8a8a8a" stroke-width="0.5" fill="none"/><path d="M124.70 167.50 L124.70 188.00" stroke="#8a8a8a" stroke-width="0.5" fill="none"/><path d="M122.00 187.80 L159.00 187.80" stroke="#8a8a8a" stroke-width="0.5" fill="none"/><text x="115.5" y="184" font-size="3.3" fill="#6e6e6e" text-anchor="middle" font-style="italic" transform="rotate(-90 115.5 184)">85</text><text x="123.4" y="178" font-size="3.3" fill="#6e6e6e" text-anchor="middle" font-style="italic" transform="rotate(-90 123.4 178)">100</text><path d="M181.00 188.00 L181.00 199.20" stroke="#8a8a8a" stroke-width="0.5" fill="none"/><text x="180" y="194" font-size="3" fill="#6e6e6e" text-anchor="middle" font-style="italic" transform="rotate(-90 180 194)">45</text><path d="M338.00 182.00 L338.00 199.20" stroke="#8a8a8a" stroke-width="0.5" fill="none"/><text x="337" y="191" font-size="3" fill="#6e6e6e" text-anchor="middle" font-style="italic" transform="rotate(-90 337 191)">45</text><path d="M137.60 186.00 L137.60 229.40" stroke="#8a8a8a" stroke-width="0.5" fill="none"/><path d="M137.60 228.50 L458.60 228.50" stroke="#8a8a8a" stroke-width="0.5" fill="none"/><text x="297" y="227.2" font-size="3.3" fill="#6e6e6e" text-anchor="middle" font-style="italic">600</text><path d="M162.90 235.00 L162.90 246.50" stroke="#353535" stroke-width="0.8" fill="none"/><path d="M162.90 245.00 L174.60 245.00" stroke="#8a8a8a" stroke-width="0.5" fill="none"/><text x="168.5" y="252.6" font-size="7.5" fill="#6e6e6e" text-anchor="start" font-style="italic" textLength="4.6" lengthAdjust="spacingAndGlyphs">В</text><path d="M239.30 235.00 L239.30 246.50" stroke="#353535" stroke-width="0.8" fill="none"/><path d="M227.00 245.00 L239.30 245.00" stroke="#8a8a8a" stroke-width="0.5" fill="none"/><text x="225" y="252.6" font-size="7.5" fill="#6e6e6e" text-anchor="start" font-style="italic" textLength="4.6" lengthAdjust="spacingAndGlyphs">Б</text><path d="M449.60 233.00 L449.60 244.40" stroke="#353535" stroke-width="0.8" fill="none"/><path d="M449.60 242.40 L461.00 242.40" stroke="#8a8a8a" stroke-width="0.5" fill="none"/><text x="455" y="250.6" font-size="7.5" fill="#6e6e6e" text-anchor="start" font-style="italic" textLength="4.6" lengthAdjust="spacingAndGlyphs">А</text><path d="M285.00 199.20 L285.00 211.50" stroke="#8a8a8a" stroke-width="0.5" fill="none"/><path d="M285.00 211.50 L297.00 211.50" stroke="#8a8a8a" stroke-width="0.5" fill="none"/><text x="288.5" y="210.1" font-size="7.5" fill="#6e6e6e" text-anchor="start" font-style="italic" textLength="4.6" lengthAdjust="spacingAndGlyphs">В</text><path d="M318.00 199.20 L318.00 212.00" stroke="#8a8a8a" stroke-width="0.5" fill="none"/><path d="M318.00 212.00 L327.00 212.00" stroke="#8a8a8a" stroke-width="0.5" fill="none"/><text x="320" y="211.1" font-size="7.5" fill="#6e6e6e" text-anchor="start" font-style="italic" textLength="4.6" lengthAdjust="spacingAndGlyphs">Г</text><text x="212.7" y="264.2" font-size="5.6" fill="#6e6e6e" text-anchor="start" font-style="italic" textLength="62.7" lengthAdjust="spacingAndGlyphs">Крепить к раме транспортера</text><path d="M212.00 267.50 L312.00 267.50" stroke="#8a8a8a" stroke-width="0.5" fill="none"/><path d="M312.00 267.30 L188.00 188.60" stroke="#8a8a8a" stroke-width="0.5" fill="none"/><path d="M312.00 267.30 L275.40 200.00" stroke="#8a8a8a" stroke-width="0.5" fill="none"/><path d="M312.00 267.30 L338.00 182.00" stroke="#8a8a8a" stroke-width="0.5" fill="none"/><path d="M552.3 179.3V143.3Q552.3 141.3 554.3 141.3H631.5Q633.5 141.3 633.5 143.3V179.3" stroke="#3c3c3c" stroke-width="0.8" fill="none"/><path d="M552.30 153.30 L563.60 141.30" stroke="#353535" stroke-width="0.8" fill="none"/><path d="M622.20 141.30 L633.50 153.30" stroke="#353535" stroke-width="0.8" fill="none"/><circle cx="556.40" cy="145.40" r="1.70" stroke="#8a8a8a" stroke-width="0.5" fill="none"/><circle cx="629.40" cy="145.40" r="1.70" stroke="#8a8a8a" stroke-width="0.5" fill="none"/><path d="M555.00 145.40 L558.00 145.40" stroke="#8a8a8a" stroke-width="0.5" fill="none"/><path d="M628.00 145.40 L631.00 145.40" stroke="#8a8a8a" stroke-width="0.5" fill="none"/><path d="M552.30 161.30 L571.30 161.30" stroke="#353535" stroke-width="0.8" fill="none"/><path d="M552.30 166.60 L571.30 166.60" stroke="#333" stroke-width="1" fill="none"/><circle cx="577.00" cy="166.00" r="5.70" stroke="#353535" stroke-width="0.8" fill="none"/><circle cx="577.00" cy="166.00" r="4.20" stroke="#8a8a8a" stroke-width="0.5" fill="none"/><path d="M548.00 167.30 L640.00 167.30" stroke="#9a9a9a" stroke-width="0.45" fill="none" stroke-dasharray="6 1.5 1 1.5"/><circle cx="606.50" cy="167.30" r="25.60" stroke="#333" stroke-width="1.05" fill="none"/><path d="M606.50 139.30 L606.50 155.00" stroke="#333" stroke-width="0.9" fill="none"/><path d="M606.50 181.30 L606.50 192.90" stroke="#333" stroke-width="0.9" fill="none"/><path d="M585.00 155.30 L595.60 160.60" stroke="#353535" stroke-width="0.8" fill="none"/><path d="M619.60 160.60 L628.20 155.30" stroke="#353535" stroke-width="0.8" fill="none"/><path d="M586.3 181.3V176.6H592.3M620.7 176.6H626.7V181.3" stroke="#353535" stroke-width="0.8" fill="none"/><path d="M586.30 181.30 L626.70 181.30" stroke="#353535" stroke-width="0.8" fill="none"/><rect x="598.00" y="174.50" width="17.00" height="6.80" stroke="#8a8a8a" stroke-width="0.5" fill="none" /><path d="M597 156.5Q606.5 152.5 616 156.5Q620 159 619.5 167.3Q620 175.5 616 178Q606.5 182 597 178Q593 175.5 593.5 167.3Q593 159 597 156.5Z" stroke="#353535" stroke-width="0.8" fill="none"/><circle cx="606.50" cy="167.30" r="9.00" stroke="#8a8a8a" stroke-width="0.5" fill="none"/><circle cx="606.50" cy="167.30" r="6.70" stroke="#333" stroke-width="0.9" fill="none"/><circle cx="598.30" cy="159.30" r="1.50" stroke="#222" stroke-width="0.5" fill="#333"/><circle cx="614.20" cy="159.30" r="1.50" stroke="#222" stroke-width="0.5" fill="#333"/><circle cx="598.30" cy="175.30" r="1.50" stroke="#222" stroke-width="0.5" fill="#333"/><circle cx="614.20" cy="175.30" r="1.50" stroke="#222" stroke-width="0.5" fill="#333"/><rect x="590.00" y="137.70" width="5.60" height="3.60" stroke="#333" stroke-width="0.7" fill="#999" /><path d="M552.3 179.3V198.6H633.5V179.3" stroke="#3c3c3c" stroke-width="0.8" fill="none"/><path d="M553.7 179.3L561 187.3V198.6" stroke="#353535" stroke-width="0.8" fill="none"/><path d="M632.1 179.3L624.9 187.3V198.6" stroke="#353535" stroke-width="0.8" fill="none"/><path d="M556.00 186.00 L556.00 198.60" stroke="#8a8a8a" stroke-width="0.5" fill="none"/><path d="M630.00 186.00 L630.00 198.60" stroke="#8a8a8a" stroke-width="0.5" fill="none"/><circle cx="551.00" cy="184.00" r="1.40" stroke="#333" stroke-width="0.6" fill="none"/><path d="M549.00 184.00 L553.00 184.00" stroke="#8a8a8a" stroke-width="0.5" fill="none"/><circle cx="551.00" cy="195.20" r="1.40" stroke="#333" stroke-width="0.6" fill="none"/><path d="M549.00 195.20 L553.00 195.20" stroke="#8a8a8a" stroke-width="0.5" fill="none"/><path d="M521.00 138.80 L521.00 198.60" stroke="#8a8a8a" stroke-width="0.5" fill="none"/><path d="M518.00 138.80 L595.00 138.80" stroke="#8a8a8a" stroke-width="0.5" fill="none"/><path d="M518.00 198.60 L552.00 198.60" stroke="#8a8a8a" stroke-width="0.5" fill="none"/><text x="519.5" y="171" font-size="3.3" fill="#6e6e6e" text-anchor="middle" font-style="italic" transform="rotate(-90 519.5 171)">180</text><path d="M550.00 198.60 L550.00 214.50" stroke="#8a8a8a" stroke-width="0.5" fill="none"/><path d="M634.00 198.60 L634.00 214.50" stroke="#8a8a8a" stroke-width="0.5" fill="none"/><path d="M555.00 198.60 L555.00 208.00" stroke="#8a8a8a" stroke-width="0.5" fill="none"/><path d="M630.80 198.60 L630.80 208.00" stroke="#8a8a8a" stroke-width="0.5" fill="none"/><path d="M555.00 207.00 L630.80 207.00" stroke="#8a8a8a" stroke-width="0.5" fill="none"/><path d="M549.80 213.80 L634.00 213.80" stroke="#8a8a8a" stroke-width="0.5" fill="none"/><text x="592" y="205.5" font-size="3.3" fill="#6e6e6e" text-anchor="middle" font-style="italic">445</text><text x="592" y="212.5" font-size="3.3" fill="#6e6e6e" text-anchor="middle" font-style="italic">485</text><text x="538.7" y="255.8" font-size="7.2" fill="#6e6e6e" text-anchor="start" font-style="italic" textLength="24.3" lengthAdjust="spacingAndGlyphs">А–А (1:1)</text><path d="M537.9 289.3H570V309.2H530.3V301L524.4 296.5L532 285.3L537.9 289.3" stroke="#3c3c3c" stroke-width="0.8" fill="none"/><path d="M536 309.2V302Q536 298.7 539 298.7H562Q565 298.7 565 302V309.2" stroke="#353535" stroke-width="0.8" fill="none"/><path d="M544.60 289.30 L544.60 298.70" stroke="#353535" stroke-width="0.8" fill="none"/><path d="M558.60 289.30 L558.60 298.70" stroke="#353535" stroke-width="0.8" fill="none"/><path d="M537.90 289.30 L537.90 291.00" stroke="#8a8a8a" stroke-width="0.5" fill="none"/><path d="M526 299L533 292M528 302L536 295M531 304L539 296M531 308L537 302M560 298L567 291M563 301L569 295M566 304L570 300M565 308L570 303" stroke="#888" stroke-width="0.45" fill="none"/><path d="M544.60 271.30 L544.60 289.00" stroke="#8a8a8a" stroke-width="0.5" fill="none"/><path d="M558.60 271.30 L558.60 289.00" stroke="#8a8a8a" stroke-width="0.5" fill="none"/><path d="M544.60 271.30 L558.60 271.30" stroke="#8a8a8a" stroke-width="0.5" fill="none"/><path d="M558.60 271.30 L572.00 271.30" stroke="#8a8a8a" stroke-width="0.5" fill="none"/><path d="M538.70 280.50 L538.70 289.00" stroke="#8a8a8a" stroke-width="0.5" fill="none"/><path d="M565.00 280.50 L565.00 289.00" stroke="#8a8a8a" stroke-width="0.5" fill="none"/><path d="M538.70 280.50 L565.00 280.50" stroke="#8a8a8a" stroke-width="0.5" fill="none"/><text x="567" y="270" font-size="3" fill="#6e6e6e" text-anchor="start" font-style="italic">ø17</text><text x="567" y="275.5" font-size="3" fill="#6e6e6e" text-anchor="start" font-style="italic">4 отв</text><text x="548" y="279" font-size="3" fill="#6e6e6e" text-anchor="start" font-style="italic">ø32</text><path d="M570.00 289.30 L582.00 289.30" stroke="#8a8a8a" stroke-width="0.5" fill="none"/><path d="M570.00 309.20 L582.00 309.20" stroke="#8a8a8a" stroke-width="0.5" fill="none"/><path d="M578.40 289.30 L578.40 309.20" stroke="#8a8a8a" stroke-width="0.5" fill="none"/><text x="577" y="300" font-size="3" fill="#6e6e6e" text-anchor="middle" font-style="italic" transform="rotate(-90 577 300)">15</text><path d="M571.00 287.00 L571.00 282.00" stroke="#8a8a8a" stroke-width="0.5" fill="none"/><path d="M566.00 292.50 L574.00 292.50" stroke="#8a8a8a" stroke-width="0.5" fill="none"/><text x="642" y="291.2" font-size="7.2" fill="#6e6e6e" text-anchor="start" font-style="italic" textLength="23.7" lengthAdjust="spacingAndGlyphs">Б–Б (1:1)</text><path d="M636.4 326.25V301.3Q672 299 690 320Q696 328 698.9 333.5" stroke="#8a8a8a" stroke-width="0.5" fill="none"/><path d="M636.4 326.25V343.8H677.4V339.3H698.9V333.5" stroke="#3c3c3c" stroke-width="0.8" fill="none"/><rect x="645.20" y="326.25" width="13.20" height="17.55" stroke="#353535" stroke-width="0.8" fill="none" /><path d="M636.4 326.25H645.2M658.4 326.25H664Q668 326.25 668 322V306.5M678 310V333.5H698.9" stroke="#353535" stroke-width="0.8" fill="none"/><path d="M664.00 305.00 L664.00 322.00" stroke="#8a8a8a" stroke-width="0.5" fill="none"/><path d="M637 333L643.5 326.5M637 339L645 331M639 343.5L645 337.5M659 332L665 326M659 338L672 325M662 343L677 328M668 343L678 333M673 335L678 330M669 321L678 312M667.8 318L678 308M680 339L686 333M686 339L692 333M692 339L698 333" stroke="#888" stroke-width="0.45" fill="none"/><path d="M651.80 314.00 L651.80 352.00" stroke="#9a9a9a" stroke-width="0.45" fill="none" stroke-dasharray="6 1.5 1 1.5"/><path d="M621.30 326.25 L636.00 326.25" stroke="#8a8a8a" stroke-width="0.5" fill="none"/><path d="M621.30 343.80 L636.00 343.80" stroke="#8a8a8a" stroke-width="0.5" fill="none"/><path d="M621.30 326.25 L621.30 343.80" stroke="#8a8a8a" stroke-width="0.5" fill="none"/><text x="620.2" y="336" font-size="3" fill="#6e6e6e" text-anchor="middle" font-style="italic" transform="rotate(-90 620.2 336)">20</text><path d="M628.60 315.00 L628.60 326.00" stroke="#8a8a8a" stroke-width="0.5" fill="none"/><path d="M626.00 320.00 L629.00 320.00" stroke="#8a8a8a" stroke-width="0.5" fill="none"/><path d="M645.20 344.00 L645.20 354.00" stroke="#8a8a8a" stroke-width="0.5" fill="none"/><path d="M658.40 344.00 L658.40 354.00" stroke="#8a8a8a" stroke-width="0.5" fill="none"/><path d="M645.20 353.00 L658.40 353.00" stroke="#8a8a8a" stroke-width="0.5" fill="none"/><text x="624.5" y="351" font-size="3" fill="#6e6e6e" text-anchor="start" font-style="italic" textLength="18" lengthAdjust="spacingAndGlyphs">4 отв. ø9</text><rect x="627.20" y="355.00" width="15.00" height="5.80" stroke="#8a8a8a" stroke-width="0.5" fill="none" /><path d="M632.00 355.00 L632.00 360.80" stroke="#8a8a8a" stroke-width="0.5" fill="none"/><circle cx="629.60" cy="357.90" r="1.50" stroke="#8a8a8a" stroke-width="0.5" fill="none"/><text x="634" y="359.5" font-size="2.8" fill="#6e6e6e" text-anchor="start" font-style="italic">ø0.2</text><text x="529.8" y="355.1" font-size="7.2" fill="#6e6e6e" text-anchor="start" font-style="italic" textLength="23" lengthAdjust="spacingAndGlyphs">В–В (1:1)</text><path d="M528.6 368.9H557.8V378.4H523.6L518.4 373.5L524.3 365.2Z" stroke="#3c3c3c" stroke-width="0.8" fill="none"/><path d="M537.30 368.90 L537.30 378.40" stroke="#353535" stroke-width="0.8" fill="none"/><path d="M547.60 368.90 L547.60 378.40" stroke="#353535" stroke-width="0.8" fill="none"/><path d="M521 376L528 369M526 378L535 369M531 378L537 372M548 376L555 369M552 378L557.8 372" stroke="#888" stroke-width="0.45" fill="none"/><path d="M542.40 364.00 L542.40 382.00" stroke="#9a9a9a" stroke-width="0.45" fill="none" stroke-dasharray="6 1.5 1 1.5"/><path d="M557.80 368.90 L566.00 368.90" stroke="#8a8a8a" stroke-width="0.5" fill="none"/><path d="M557.80 378.40 L566.00 378.40" stroke="#8a8a8a" stroke-width="0.5" fill="none"/><path d="M563.40 368.90 L563.40 378.40" stroke="#8a8a8a" stroke-width="0.5" fill="none"/><text x="561.7" y="362" font-size="3" fill="#6e6e6e" text-anchor="middle" font-style="italic" transform="rotate(-90 561.7 362)">16</text><path d="M537.30 378.40 L537.30 385.50" stroke="#8a8a8a" stroke-width="0.5" fill="none"/><path d="M547.60 378.40 L547.60 385.50" stroke="#8a8a8a" stroke-width="0.5" fill="none"/><path d="M537.30 384.30 L554.00 384.30" stroke="#8a8a8a" stroke-width="0.5" fill="none"/><text x="553" y="383" font-size="3" fill="#6e6e6e" text-anchor="start" font-style="italic">ø14</text><path d="M118.00 298.00 L236.00 298.00" stroke="#8a8a8a" stroke-width="0.5" fill="none"/><path d="M118.00 380.50 L236.00 380.50" stroke="#8a8a8a" stroke-width="0.5" fill="none"/><path d="M120.40 298.00 L120.40 380.50" stroke="#8a8a8a" stroke-width="0.5" fill="none"/><text x="119" y="340" font-size="3.3" fill="#6e6e6e" text-anchor="middle" font-style="italic" transform="rotate(-90 119 340)">400</text><path d="M129.60 326.20 L466.00 326.20" stroke="#9a9a9a" stroke-width="0.45" fill="none" stroke-dasharray="6 1.5 1 1.5"/><path d="M156.4 306H141.4L137.2 310.2V341.4L141.4 345.6H156.4Z" stroke="#353535" stroke-width="0.8" fill="none"/><path d="M156.40 308.20 L197.10 308.20" stroke="#353535" stroke-width="0.8" fill="none"/><path d="M156.40 345.60 L197.10 345.60" stroke="#353535" stroke-width="0.8" fill="none"/><rect x="159.20" y="306.00" width="36.30" height="2.20" stroke="#8a8a8a" stroke-width="0.5" fill="none" /><path d="M163.00 306.00 L163.00 309.50" stroke="#8a8a8a" stroke-width="0.5" fill="none"/><path d="M191.00 306.00 L191.00 309.50" stroke="#8a8a8a" stroke-width="0.5" fill="none"/><path d="M159.20 343.40 L195.50 343.40" stroke="#8a8a8a" stroke-width="0.5" fill="none"/><path d="M163.00 342.00 L163.00 345.60" stroke="#8a8a8a" stroke-width="0.5" fill="none"/><path d="M156.40 317.60 L179.50 317.60" stroke="#353535" stroke-width="0.8" fill="none"/><path d="M179.50 317.60 L194.90 317.60" stroke="#222" stroke-width="1.1" fill="none"/><path d="M156.40 318.80 L179.50 318.80" stroke="#8a8a8a" stroke-width="0.5" fill="none"/><path d="M156.40 322.00 L179.50 322.00" stroke="#8a8a8a" stroke-width="0.5" fill="none"/><path d="M156.40 330.20 L179.50 330.20" stroke="#8a8a8a" stroke-width="0.5" fill="none"/><path d="M156.40 334.00 L179.50 334.00" stroke="#333" stroke-width="1" fill="none"/><path d="M179.50 317.60 L179.50 334.60" stroke="#353535" stroke-width="0.8" fill="none"/><path d="M179.50 335.70 L195.00 335.70" stroke="#8a8a8a" stroke-width="0.5" fill="none"/><rect x="183.90" y="335.70" width="6.60" height="4.40" stroke="#8a8a8a" stroke-width="0.5" fill="none" /><path d="M196.00 308.20 L196.00 345.60" stroke="#353535" stroke-width="0.8" fill="none"/><path d="M197.1 308.2L202.6 320.9V331.9L197.1 345.6" stroke="#353535" stroke-width="0.8" fill="none"/><rect x="202.60" y="320.30" width="8.80" height="11.00" stroke="#353535" stroke-width="0.8" fill="none" /><path d="M203.80 320.50 L203.80 331.00" stroke="#8a8a8a" stroke-width="0.5" fill="none"/><path d="M204.80 320.50 L204.80 331.00" stroke="#8a8a8a" stroke-width="0.5" fill="none"/><path d="M205.80 320.50 L205.80 331.00" stroke="#8a8a8a" stroke-width="0.5" fill="none"/><path d="M206.80 320.50 L206.80 331.00" stroke="#8a8a8a" stroke-width="0.5" fill="none"/><rect x="211.40" y="315.40" width="14.90" height="20.90" stroke="#353535" stroke-width="0.8" fill="none" /><path d="M214.40 315.40 L214.40 336.30" stroke="#353535" stroke-width="0.8" fill="none"/><path d="M215.30 318.00 L215.30 334.00" stroke="#8a8a8a" stroke-width="0.5" fill="none"/><path d="M222.40 318.00 L222.40 334.00" stroke="#8a8a8a" stroke-width="0.5" fill="none"/><path d="M223.30 315.40 L223.30 336.30" stroke="#353535" stroke-width="0.8" fill="none"/><path d="M215.30 320.00 L222.40 320.00" stroke="#8a8a8a" stroke-width="0.5" fill="none"/><path d="M215.30 331.50 L222.40 331.50" stroke="#8a8a8a" stroke-width="0.5" fill="none"/><rect x="226.30" y="320.30" width="6.60" height="10.50" stroke="#353535" stroke-width="0.8" fill="none" /><rect x="232.90" y="321.50" width="3.00" height="8.00" stroke="#8a8a8a" stroke-width="0.5" fill="none" /><rect x="235.5" y="298.7" width="43.1" height="81.3" rx="1.2" stroke="#3c3c3c" stroke-width="0.8" fill="none"/><path d="M240.80 298.70 L240.80 380.00" stroke="#353535" stroke-width="0.8" fill="none"/><path d="M273.30 298.70 L273.30 380.00" stroke="#353535" stroke-width="0.8" fill="none"/><path d="M240.80 311.20 L273.30 311.20" stroke="#353535" stroke-width="0.8" fill="none"/><path d="M240.80 368.40 L273.30 368.40" stroke="#353535" stroke-width="0.8" fill="none"/><circle cx="238.70" cy="304.40" r="1.60" stroke="#333" stroke-width="0.75" fill="#bbb"/><circle cx="238.70" cy="316.90" r="1.60" stroke="#333" stroke-width="0.75" fill="#bbb"/><circle cx="238.70" cy="334.60" r="1.60" stroke="#333" stroke-width="0.75" fill="#bbb"/><circle cx="238.70" cy="343.50" r="1.60" stroke="#333" stroke-width="0.75" fill="#bbb"/><circle cx="238.70" cy="361.30" r="1.60" stroke="#333" stroke-width="0.75" fill="#bbb"/><circle cx="238.70" cy="378.00" r="1.60" stroke="#333" stroke-width="0.75" fill="#bbb"/><circle cx="275.60" cy="301.20" r="1.60" stroke="#333" stroke-width="0.75" fill="#bbb"/><circle cx="275.60" cy="315.10" r="1.60" stroke="#333" stroke-width="0.75" fill="#bbb"/><circle cx="275.60" cy="336.40" r="1.60" stroke="#333" stroke-width="0.75" fill="#bbb"/><circle cx="275.60" cy="343.50" r="1.60" stroke="#333" stroke-width="0.75" fill="#bbb"/><circle cx="275.60" cy="361.30" r="1.60" stroke="#333" stroke-width="0.75" fill="#bbb"/><circle cx="275.60" cy="375.50" r="1.60" stroke="#333" stroke-width="0.75" fill="#bbb"/><rect x="252.90" y="298.70" width="7.10" height="12.50" stroke="#8a8a8a" stroke-width="0.5" fill="none" /><rect x="252.90" y="368.40" width="7.10" height="11.60" stroke="#8a8a8a" stroke-width="0.5" fill="none" /><path d="M252.90 301.50 L260.00 301.50" stroke="#8a8a8a" stroke-width="0.5" fill="none"/><path d="M252.90 304.50 L260.00 304.50" stroke="#8a8a8a" stroke-width="0.5" fill="none"/><path d="M252.90 307.50 L260.00 307.50" stroke="#8a8a8a" stroke-width="0.5" fill="none"/><path d="M252.90 371.50 L260.00 371.50" stroke="#8a8a8a" stroke-width="0.5" fill="none"/><path d="M252.90 374.50 L260.00 374.50" stroke="#8a8a8a" stroke-width="0.5" fill="none"/><path d="M252.90 377.50 L260.00 377.50" stroke="#8a8a8a" stroke-width="0.5" fill="none"/><path d="M252.5 380.2H261Q261 383.5 256.8 383.8Q252.5 383.5 252.5 380.2Z" stroke="#333" stroke-width="0.7" fill="#888"/><circle cx="257.30" cy="339.60" r="3.30" stroke="#353535" stroke-width="0.8" fill="none"/><circle cx="257.30" cy="339.60" r="2.00" stroke="#8a8a8a" stroke-width="0.5" fill="none"/><rect x="278.60" y="317.80" width="12.40" height="16.80" stroke="#353535" stroke-width="0.8" fill="none" /><path d="M293.5 306.5H311.6Q313.9 306.5 313.9 309.5V342.8Q313.9 345.8 311.6 345.8H293.5Q291 345.8 291 342.8V309.5Q291 306.5 293.5 306.5Z" stroke="#353535" stroke-width="0.8" fill="none"/><path d="M293.50 306.80 L293.50 345.50" stroke="#333" stroke-width="0.6" fill="none"/><path d="M299.40 306.80 L299.40 345.50" stroke="#333" stroke-width="1.0" fill="none"/><path d="M305.80 306.80 L305.80 345.50" stroke="#333" stroke-width="1.0" fill="none"/><path d="M311.20 306.80 L311.20 345.50" stroke="#333" stroke-width="0.6" fill="none"/><path d="M302.30 305.00 L302.30 347.30" stroke="#353535" stroke-width="0.8" fill="none"/><rect x="313.90" y="317.50" width="8.60" height="17.30" stroke="#353535" stroke-width="0.8" fill="none" /><path d="M322.5 317.5L326 319.3V332.8L322.5 334.8" stroke="#8a8a8a" stroke-width="0.5" fill="none"/><path d="M326 312.3L328.3 307.1H335.8L337.5 312.3V339.4L335.8 344.7H328.3L326 339.4Z" stroke="#353535" stroke-width="0.8" fill="none"/><path d="M328.30 312.30 L335.80 312.30" stroke="#353535" stroke-width="0.8" fill="none"/><path d="M328.30 339.40 L335.80 339.40" stroke="#353535" stroke-width="0.8" fill="none"/><path d="M329.50 312.30 L329.50 339.40" stroke="#333" stroke-width="0.9" fill="none"/><path d="M334.60 312.30 L334.60 339.40" stroke="#333" stroke-width="0.9" fill="none"/><path d="M328.8 310.6L331.3 308.1M330.8 311.90000000000003L334.3 308.40000000000003M328.8 343.2L332.3 339.7M331.8 344.2L335.3 340.7" stroke="#777" stroke-width="0.45" fill="none"/><circle cx="326.00" cy="318.10" r="1.20" stroke="#333" stroke-width="0.5" fill="#444"/><circle cx="326.00" cy="333.70" r="1.20" stroke="#333" stroke-width="0.5" fill="#444"/><circle cx="339.30" cy="318.10" r="1.20" stroke="#333" stroke-width="0.5" fill="#444"/><circle cx="339.30" cy="333.70" r="1.20" stroke="#333" stroke-width="0.5" fill="#444"/><path d="M331.80 300.00 L331.80 351.00" stroke="#8a8a8a" stroke-width="0.5" fill="none"/><rect x="337.50" y="319.20" width="9.90" height="13.30" stroke="#353535" stroke-width="0.8" fill="none" /><rect x="347.40" y="300.50" width="9.00" height="51.10" stroke="#353535" stroke-width="0.8" fill="none" /><path d="M347.80 300.50 L347.80 351.60" stroke="#333" stroke-width="1" fill="none"/><path d="M356.4 297H429.3V359Q415 354 395 358Q375 363 356.4 360Z" stroke="#353535" stroke-width="0.8" fill="none"/><rect x="429.30" y="300.60" width="9.30" height="50.50" stroke="#353535" stroke-width="0.8" fill="none" /><path d="M438.20 300.60 L438.20 351.10" stroke="#333" stroke-width="1" fill="none"/><path d="M390.40 300.30 L390.40 351.60" stroke="#8a8a8a" stroke-width="0.5" fill="none"/><text x="389" y="326" font-size="3.3" fill="#6e6e6e" text-anchor="middle" font-style="italic" transform="rotate(-90 389 326)">ø250</text><rect x="438.60" y="319.00" width="4.40" height="13.00" stroke="#353535" stroke-width="0.8" fill="none" /><path d="M443 312.59999999999997L446 307.4H453.5L457.3 312.59999999999997V338.7L453.5 344H446L443 338.7Z" stroke="#353535" stroke-width="0.8" fill="none"/><path d="M446.00 312.60 L453.50 312.60" stroke="#353535" stroke-width="0.8" fill="none"/><path d="M446.00 338.70 L453.50 338.70" stroke="#353535" stroke-width="0.8" fill="none"/><path d="M447.20 312.60 L447.20 338.70" stroke="#333" stroke-width="0.9" fill="none"/><path d="M452.30 312.60 L452.30 338.70" stroke="#333" stroke-width="0.9" fill="none"/><path d="M446.5 310.9L449 308.4M448.5 312.2L452 308.7M446.5 342.5L450 339M449.5 343.5L453 340" stroke="#777" stroke-width="0.45" fill="none"/><rect x="453.00" y="313.00" width="4.30" height="26.00" stroke="#8a8a8a" stroke-width="0.5" fill="none" /><circle cx="442.40" cy="318.60" r="1.20" stroke="#333" stroke-width="0.5" fill="#444"/><circle cx="442.40" cy="333.60" r="1.20" stroke="#333" stroke-width="0.5" fill="#444"/><circle cx="456.20" cy="318.60" r="1.20" stroke="#333" stroke-width="0.5" fill="#444"/><circle cx="456.20" cy="333.60" r="1.20" stroke="#333" stroke-width="0.5" fill="#444"/><path d="M449.80 300.00 L449.80 351.00" stroke="#8a8a8a" stroke-width="0.5" fill="none"/><path d="M171.00 404.70 L177.50 404.70 L204.70 332.00" stroke="#8a8a8a" stroke-width="0.5" fill="none"/><text x="174" y="402.6" font-size="7.5" fill="#6e6e6e" text-anchor="start" font-style="italic" textLength="4.6" lengthAdjust="spacingAndGlyphs">А</text><path d="M193.50 404.70 L200.00 404.70 L231.20 332.00" stroke="#8a8a8a" stroke-width="0.5" fill="none"/><text x="195.8" y="402.6" font-size="7.5" fill="#6e6e6e" text-anchor="start" font-style="italic" textLength="4.6" lengthAdjust="spacingAndGlyphs">Б</text><text x="234.7" y="407.8" font-size="8.6" fill="#6e6e6e" text-anchor="start" font-style="italic" textLength="148.1" lengthAdjust="spacingAndGlyphs">Схема расположения опорных поверхностей привода</text><path d="M190.80 452.10 L501.50 452.10" stroke="#8a8a8a" stroke-width="0.5" fill="none" stroke-dasharray="14 1.5 1 1.5"/><rect x="158.40" y="434.40" width="37.10" height="7.90" stroke="#444" stroke-width="0.65" fill="none" /><rect x="158.40" y="463.40" width="37.10" height="8.10" stroke="#444" stroke-width="0.65" fill="none" /><path d="M156.00 436.40 L198.00 436.40" stroke="#9a9a9a" stroke-width="0.45" fill="none" stroke-dasharray="6 1.5 1 1.5"/><path d="M156.00 469.00 L198.00 469.00" stroke="#9a9a9a" stroke-width="0.45" fill="none" stroke-dasharray="6 1.5 1 1.5"/><circle cx="162.40" cy="436.40" r="1.30" stroke="#444" stroke-width="0.55" fill="none"/><circle cx="162.40" cy="469.00" r="1.30" stroke="#444" stroke-width="0.55" fill="none"/><circle cx="191.60" cy="436.40" r="1.30" stroke="#444" stroke-width="0.55" fill="none"/><circle cx="191.60" cy="469.00" r="1.30" stroke="#444" stroke-width="0.55" fill="none"/><path d="M158.40 427.10 L195.50 427.10" stroke="#8a8a8a" stroke-width="0.5" fill="none"/><path d="M158.40 424.00 L158.40 434.00" stroke="#8a8a8a" stroke-width="0.5" fill="none"/><path d="M195.50 424.00 L195.50 434.00" stroke="#8a8a8a" stroke-width="0.5" fill="none"/><text x="177" y="426" font-size="3.6" fill="#6e6e6e" text-anchor="middle" font-style="italic">160</text><path d="M133.00 436.10 L158.00 436.10" stroke="#8a8a8a" stroke-width="0.5" fill="none"/><path d="M134.30 436.10 L134.30 503.00" stroke="#8a8a8a" stroke-width="0.5" fill="none"/><path d="M148.30 436.10 L148.30 468.80" stroke="#8a8a8a" stroke-width="0.5" fill="none"/><path d="M147.00 468.80 L158.00 468.80" stroke="#8a8a8a" stroke-width="0.5" fill="none"/><text x="133" y="470" font-size="3.6" fill="#6e6e6e" text-anchor="middle" font-style="italic" transform="rotate(-90 133 470)">170</text><text x="147" y="452" font-size="3.6" fill="#6e6e6e" text-anchor="middle" font-style="italic" transform="rotate(-90 147 452)">120</text><path d="M195.50 434.40 L210.00 434.40" stroke="#8a8a8a" stroke-width="0.5" fill="none"/><path d="M195.50 442.30 L210.00 442.30" stroke="#8a8a8a" stroke-width="0.5" fill="none"/><path d="M206.80 434.40 L206.80 442.30" stroke="#8a8a8a" stroke-width="0.5" fill="none"/><text x="205.5" y="439" font-size="3.3" fill="#6e6e6e" text-anchor="middle" font-style="italic" transform="rotate(-90 205.5 439)">12</text><path d="M191.60 442.30 L191.60 451.30" stroke="#8a8a8a" stroke-width="0.5" fill="none"/><path d="M174.00 450.40 L200.90 450.40" stroke="#8a8a8a" stroke-width="0.5" fill="none"/><text x="177" y="449.3" font-size="3.3" fill="#6e6e6e" text-anchor="start" font-style="italic">20</text><path d="M162.40 442.30 L162.40 463.40" stroke="#8a8a8a" stroke-width="0.5" fill="none"/><text x="161" y="453" font-size="3.3" fill="#6e6e6e" text-anchor="middle" font-style="italic" transform="rotate(-90 161 453)">15</text><path d="M162.40 471.50 L162.40 532.40" stroke="#8a8a8a" stroke-width="0.5" fill="none"/><path d="M191.60 471.50 L191.60 525.60" stroke="#8a8a8a" stroke-width="0.5" fill="none"/><path d="M133.00 503.00 L237.00 503.00" stroke="#8a8a8a" stroke-width="0.5" fill="none"/><path d="M237.00 503.50 L286.00 503.50" stroke="#9a9a9a" stroke-width="0.45" fill="none" stroke-dasharray="6 1.5 1 1.5"/><path d="M139.30 478.20 L164.00 468.50" stroke="#8a8a8a" stroke-width="0.5" fill="none"/><text x="140" y="476" font-size="3.3" fill="#6e6e6e" text-anchor="start" font-style="italic" transform="rotate(-20 140 476)">ø15</text><text x="143" y="481.5" font-size="3.3" fill="#6e6e6e" text-anchor="start" font-style="italic" transform="rotate(-20 143 481.5)">4 отв</text><rect x="237.30" y="426.10" width="10.30" height="10.70" stroke="#444" stroke-width="0.65" fill="none" /><circle cx="239.40" cy="429.30" r="1.40" stroke="#444" stroke-width="0.6" fill="none"/><rect x="268.40" y="426.10" width="10.30" height="10.70" stroke="#444" stroke-width="0.65" fill="none" /><circle cx="275.30" cy="429.30" r="1.40" stroke="#444" stroke-width="0.6" fill="none"/><rect x="237.30" y="496.80" width="10.30" height="10.70" stroke="#444" stroke-width="0.65" fill="none" /><circle cx="239.30" cy="503.60" r="1.40" stroke="#444" stroke-width="0.6" fill="none"/><rect x="268.40" y="496.80" width="10.30" height="10.70" stroke="#444" stroke-width="0.65" fill="none" /><circle cx="275.20" cy="503.60" r="1.40" stroke="#444" stroke-width="0.6" fill="none"/><path d="M239.30 418.00 L239.30 526.00" stroke="#9a9a9a" stroke-width="0.45" fill="none" stroke-dasharray="6 1.5 1 1.5"/><path d="M275.30 418.00 L275.30 526.00" stroke="#9a9a9a" stroke-width="0.45" fill="none" stroke-dasharray="6 1.5 1 1.5"/><path d="M222.50 429.00 L222.50 503.30" stroke="#8a8a8a" stroke-width="0.5" fill="none"/><path d="M220.00 429.00 L237.00 429.00" stroke="#8a8a8a" stroke-width="0.5" fill="none"/><path d="M228.20 429.00 L228.20 452.30" stroke="#8a8a8a" stroke-width="0.5" fill="none"/><text x="221.3" y="470" font-size="3.3" fill="#6e6e6e" text-anchor="middle" font-style="italic" transform="rotate(-90 221.3 470)">285</text><text x="227" y="441" font-size="3.3" fill="#6e6e6e" text-anchor="middle" font-style="italic" transform="rotate(-90 227 441)">45</text><path d="M248.00 431.00 L268.00 431.00" stroke="#8a8a8a" stroke-width="0.5" fill="none"/><text x="257" y="430" font-size="3" fill="#6e6e6e" text-anchor="start" font-style="italic">130</text><path d="M264.00 432.00 L298.00 421.00" stroke="#8a8a8a" stroke-width="0.5" fill="none"/><text x="292" y="420" font-size="3" fill="#6e6e6e" text-anchor="start" font-style="italic" transform="rotate(-20 292 420)">ø15</text><path d="M268.50 478.00 L278.50 478.00" stroke="#8a8a8a" stroke-width="0.5" fill="none"/><path d="M268.50 476.00 L268.50 497.00" stroke="#8a8a8a" stroke-width="0.5" fill="none"/><path d="M278.50 476.00 L278.50 497.00" stroke="#8a8a8a" stroke-width="0.5" fill="none"/><text x="262" y="477" font-size="3" fill="#6e6e6e" text-anchor="start" font-style="italic">30</text><path d="M268.50 490.00 L290.00 490.00" stroke="#8a8a8a" stroke-width="0.5" fill="none"/><text x="289" y="489" font-size="3" fill="#6e6e6e" text-anchor="start" font-style="italic">3</text><path d="M278.50 507.50 L290.00 507.50" stroke="#8a8a8a" stroke-width="0.5" fill="none"/><path d="M284.00 495.00 L284.00 515.00" stroke="#8a8a8a" stroke-width="0.5" fill="none"/><text x="282.5" y="505" font-size="3" fill="#6e6e6e" text-anchor="middle" font-style="italic" transform="rotate(-90 282.5 505)">15</text><rect x="327.30" y="431.80" width="11.20" height="11.10" stroke="#444" stroke-width="0.65" fill="none" /><circle cx="332.80" cy="437.30" r="1.30" stroke="#8a8a8a" stroke-width="0.5" fill="none"/><rect x="327.30" y="462.70" width="11.20" height="11.10" stroke="#444" stroke-width="0.65" fill="none" /><circle cx="332.80" cy="468.20" r="1.30" stroke="#8a8a8a" stroke-width="0.5" fill="none"/><rect x="444.30" y="431.80" width="11.20" height="11.10" stroke="#444" stroke-width="0.65" fill="none" /><circle cx="449.80" cy="437.30" r="1.30" stroke="#8a8a8a" stroke-width="0.5" fill="none"/><rect x="444.30" y="462.70" width="11.20" height="11.10" stroke="#444" stroke-width="0.65" fill="none" /><circle cx="449.80" cy="468.20" r="1.30" stroke="#8a8a8a" stroke-width="0.5" fill="none"/><path d="M332.50 418.00 L332.50 442.00" stroke="#9a9a9a" stroke-width="0.45" fill="none" stroke-dasharray="6 1.5 1 1.5"/><path d="M332.50 442.70 L332.50 525.60" stroke="#8a8a8a" stroke-width="0.5" fill="none"/><path d="M449.60 418.00 L449.60 474.00" stroke="#9a9a9a" stroke-width="0.45" fill="none" stroke-dasharray="6 1.5 1 1.5"/><path d="M449.60 474.00 L449.60 532.40" stroke="#8a8a8a" stroke-width="0.5" fill="none"/><path d="M320.00 445.00 L338.00 437.00" stroke="#8a8a8a" stroke-width="0.5" fill="none"/><text x="310" y="446" font-size="3" fill="#6e6e6e" text-anchor="start" font-style="italic" transform="rotate(-20 310 446)">ø9</text><path d="M336.00 467.00 L352.00 472.00" stroke="#8a8a8a" stroke-width="0.5" fill="none"/><text x="350" y="474" font-size="3" fill="#6e6e6e" text-anchor="start" font-style="italic" transform="rotate(-20 350 474)">4отв</text><text x="322" y="450.5" font-size="3" fill="#6e6e6e" text-anchor="start" font-style="italic">ø=600</text><path d="M455.00 437.50 L474.00 437.50" stroke="#8a8a8a" stroke-width="0.5" fill="none"/><path d="M455.00 468.70 L474.00 468.70" stroke="#8a8a8a" stroke-width="0.5" fill="none"/><path d="M471.60 437.50 L471.60 468.70" stroke="#8a8a8a" stroke-width="0.5" fill="none"/><path d="M455.00 431.80 L484.00 431.80" stroke="#8a8a8a" stroke-width="0.5" fill="none"/><path d="M455.00 473.90 L484.00 473.90" stroke="#8a8a8a" stroke-width="0.5" fill="none"/><path d="M480.70 431.80 L480.70 473.90" stroke="#8a8a8a" stroke-width="0.5" fill="none"/><text x="470.3" y="455" font-size="3" fill="#6e6e6e" text-anchor="middle" font-style="italic" transform="rotate(-90 470.3 455)">30</text><text x="479.5" y="455" font-size="3" fill="#6e6e6e" text-anchor="middle" font-style="italic" transform="rotate(-90 479.5 455)">38</text><path d="M436.00 431.80 L444.00 431.80" stroke="#8a8a8a" stroke-width="0.5" fill="none"/><path d="M436.00 442.90 L444.00 442.90" stroke="#8a8a8a" stroke-width="0.5" fill="none"/><path d="M438.50 425.00 L438.50 443.00" stroke="#8a8a8a" stroke-width="0.5" fill="none"/><text x="436" y="434" font-size="3" fill="#6e6e6e" text-anchor="start" font-style="italic">30</text><path d="M444.30 418.00 L444.30 431.00" stroke="#8a8a8a" stroke-width="0.5" fill="none"/><path d="M455.20 418.00 L455.20 431.00" stroke="#8a8a8a" stroke-width="0.5" fill="none"/><path d="M444.30 419.50 L455.20 419.50" stroke="#8a8a8a" stroke-width="0.5" fill="none"/><text x="447" y="418" font-size="3" fill="#6e6e6e" text-anchor="start" font-style="italic">20</text><path d="M437.00 475.00 L460.00 475.00" stroke="#8a8a8a" stroke-width="0.5" fill="none"/><path d="M462.00 463.00 L462.00 491.00" stroke="#8a8a8a" stroke-width="0.5" fill="none"/><text x="432" y="475" font-size="3" fill="#6e6e6e" text-anchor="start" font-style="italic">17</text><path d="M162.80 525.60 L449.50 525.60" stroke="#8a8a8a" stroke-width="0.5" fill="none"/><path d="M162.80 532.40 L449.50 532.40" stroke="#8a8a8a" stroke-width="0.5" fill="none"/><text x="177" y="524.3" font-size="3.2" fill="#6e6e6e" text-anchor="middle" font-style="italic">160</text><text x="215" y="524.3" font-size="3.2" fill="#6e6e6e" text-anchor="middle" font-style="italic">227</text><text x="257" y="524.3" font-size="3.2" fill="#6e6e6e" text-anchor="middle" font-style="italic">135</text><text x="288" y="524.3" font-size="3.2" fill="#6e6e6e" text-anchor="middle" font-style="italic">110</text><text x="388" y="524.3" font-size="3.2" fill="#6e6e6e" text-anchor="middle" font-style="italic">600</text><text x="296" y="531.2" font-size="3.2" fill="#6e6e6e" text-anchor="middle" font-style="italic">1060</text><text x="563.3" y="439.2" font-size="5.8" fill="#7a7a7a" text-anchor="start" font-style="italic" textLength="59.5" lengthAdjust="spacingAndGlyphs">Технические характеристики</text><text x="563.5" y="448.6" font-size="5.8" fill="#7a7a7a" text-anchor="start" font-style="italic" textLength="90.1" lengthAdjust="spacingAndGlyphs">1. Окружная сила на ленте транспортера, Н</text><text x="677.4" y="447.1" font-size="5.8" fill="#7a7a7a" text-anchor="start" font-style="italic" textLength="12.0" lengthAdjust="spacingAndGlyphs">3200</text><text x="561.5" y="454.5" font-size="5.8" fill="#7a7a7a" text-anchor="start" font-style="italic" textLength="69.2" lengthAdjust="spacingAndGlyphs">2. Скорость движения ленты, м/с</text><text x="676.6" y="453.0" font-size="5.8" fill="#7a7a7a" text-anchor="start" font-style="italic" textLength="14.4" lengthAdjust="spacingAndGlyphs">1.6 м/с</text><text x="561.8" y="461.7" font-size="5.8" fill="#7a7a7a" text-anchor="start" font-style="italic" textLength="91.5" lengthAdjust="spacingAndGlyphs">3.Передаточное отношение механизма ленты</text><text x="677.4" y="460.2" font-size="5.8" fill="#7a7a7a" text-anchor="start" font-style="italic" textLength="12.8" lengthAdjust="spacingAndGlyphs">11.657</text><text x="561.8" y="467.8" font-size="5.8" fill="#7a7a7a" text-anchor="start" font-style="italic" textLength="74.8" lengthAdjust="spacingAndGlyphs">4. Мощность электродвигателя, кВт</text><text x="682.6" y="466.3" font-size="5.8" fill="#7a7a7a" text-anchor="start" font-style="italic" textLength="5.9" lengthAdjust="spacingAndGlyphs">5.5</text><text x="561" y="474.1" font-size="5.8" fill="#7a7a7a" text-anchor="start" font-style="italic" textLength="103.7" lengthAdjust="spacingAndGlyphs">5. Частота вращения вала электродвигателя, мин</text><text x="680.9" y="472.6" font-size="5.8" fill="#7a7a7a" text-anchor="start" font-style="italic" textLength="9.3" lengthAdjust="spacingAndGlyphs">1432</text><text x="564.4" y="484.2" font-size="5.8" fill="#7a7a7a" text-anchor="start" font-style="italic" textLength="50.1" lengthAdjust="spacingAndGlyphs">Технические требования</text><text x="563.5" y="491.9" font-size="5.8" fill="#7a7a7a" text-anchor="start" font-style="italic" textLength="63.8" lengthAdjust="spacingAndGlyphs">1. Допустимые смещения валов</text><text x="636.6" y="491.9" font-size="5.8" fill="#7a7a7a" text-anchor="start" font-style="italic" textLength="11.6" lengthAdjust="spacingAndGlyphs">А и Б</text><text x="666.4" y="491.9" font-size="5.8" fill="#7a7a7a" text-anchor="start" font-style="italic" textLength="11.4" lengthAdjust="spacingAndGlyphs">В и Г</text><text x="570.3" y="497" font-size="5.5" fill="#7a7a7a" text-anchor="start" font-style="italic" textLength="23" lengthAdjust="spacingAndGlyphs">осевое, мм</text><text x="641.7" y="497" font-size="5" fill="#7a7a7a" text-anchor="start" font-style="italic" textLength="3.3" lengthAdjust="spacingAndGlyphs">±1</text><text x="672.3" y="497" font-size="5" fill="#7a7a7a" text-anchor="start" font-style="italic" textLength="3.7" lengthAdjust="spacingAndGlyphs">±1</text><text x="570" y="502.2" font-size="5.5" fill="#7a7a7a" text-anchor="start" font-style="italic" textLength="30.9" lengthAdjust="spacingAndGlyphs">радиальное, мм</text><text x="636.6" y="502.2" font-size="5" fill="#7a7a7a" text-anchor="start" font-style="italic" textLength="6" lengthAdjust="spacingAndGlyphs">0.15</text><text x="668" y="502.2" font-size="5" fill="#7a7a7a" text-anchor="start" font-style="italic" textLength="6" lengthAdjust="spacingAndGlyphs">0.2</text><text x="569.5" y="508.1" font-size="5.5" fill="#7a7a7a" text-anchor="start" font-style="italic" textLength="24.3" lengthAdjust="spacingAndGlyphs">угловое, мм</text><text x="631.5" y="508.1" font-size="5" fill="#7a7a7a" text-anchor="start" font-style="italic" textLength="13.6" lengthAdjust="spacingAndGlyphs">0.6/100</text><text x="663.8" y="508.1" font-size="5" fill="#7a7a7a" text-anchor="start" font-style="italic" textLength="13.6" lengthAdjust="spacingAndGlyphs">2.4/100</text><rect x="570.20" y="514.40" width="150.30" height="43.80" stroke="#333" stroke-width="0.9" fill="none" /><path d="M575.50 514.40 L575.50 534.40" stroke="#333" stroke-width="0.9" fill="none"/><path d="M575.50 534.40 L575.50 558.20" stroke="#666" stroke-width="0.5" fill="none"/><path d="M583.60 514.40 L583.60 558.20" stroke="#999" stroke-width="0.7" fill="none"/><path d="M602.30 514.40 L602.30 558.20" stroke="#333" stroke-width="0.9" fill="none"/><path d="M614.60 514.40 L614.60 558.20" stroke="#333" stroke-width="0.9" fill="none"/><path d="M622.70 514.40 L622.70 558.20" stroke="#333" stroke-width="0.9" fill="none"/><path d="M570.20 518.40 L622.70 518.40" stroke="#555" stroke-width="0.6" fill="none"/><path d="M570.20 522.40 L622.70 522.40" stroke="#555" stroke-width="0.6" fill="none"/><path d="M570.20 526.40 L622.70 526.40" stroke="#555" stroke-width="0.6" fill="none"/><path d="M570.20 538.40 L622.70 538.40" stroke="#555" stroke-width="0.6" fill="none"/><path d="M570.20 542.40 L622.70 542.40" stroke="#555" stroke-width="0.6" fill="none"/><path d="M570.20 546.40 L622.70 546.40" stroke="#555" stroke-width="0.6" fill="none"/><path d="M570.20 550.40 L622.70 550.40" stroke="#555" stroke-width="0.6" fill="none"/><path d="M570.20 554.40 L622.70 554.40" stroke="#555" stroke-width="0.6" fill="none"/><path d="M570.20 530.40 L622.70 530.40" stroke="#333" stroke-width="0.9" fill="none"/><path d="M570.20 534.40 L622.70 534.40" stroke="#333" stroke-width="0.9" fill="none"/><path d="M622.70 526.50 L720.50 526.50" stroke="#333" stroke-width="0.9" fill="none"/><path d="M622.70 546.30 L720.50 546.30" stroke="#333" stroke-width="0.9" fill="none"/><path d="M679.60 526.50 L679.60 558.20" stroke="#333" stroke-width="0.9" fill="none"/><path d="M679.60 529.80 L720.50 529.80" stroke="#444" stroke-width="0.6" fill="none"/><path d="M692.00 526.50 L692.00 546.30" stroke="#444" stroke-width="0.6" fill="none"/><path d="M705.20 526.50 L705.20 546.30" stroke="#444" stroke-width="0.6" fill="none"/><path d="M684.00 529.80 L684.00 542.60" stroke="#555" stroke-width="0.45" fill="none"/><path d="M688.00 529.80 L688.00 542.60" stroke="#555" stroke-width="0.45" fill="none"/><path d="M679.60 542.60 L720.50 542.60" stroke="#444" stroke-width="0.6" fill="none"/><text x="665" y="523" font-size="8.5" fill="#6e6e6e" text-anchor="middle" font-style="italic" textLength="45.5" lengthAdjust="spacingAndGlyphs">АВЧ4.7.00.00 ВО</text><text x="651" y="535" font-size="6.2" fill="#6e6e6e" text-anchor="middle" font-style="italic" textLength="47" lengthAdjust="spacingAndGlyphs">Привод ленточного</text><text x="651" y="543.5" font-size="6.2" fill="#6e6e6e" text-anchor="middle" font-style="italic" textLength="34" lengthAdjust="spacingAndGlyphs">транспортера</text><text x="712.5" y="539" font-size="5" fill="#6e6e6e" text-anchor="middle" font-style="italic">1 : 4</text><text x="684.5" y="528.8" font-size="2.5" fill="#6e6e6e" text-anchor="start" font-style="italic">Лит.</text><text x="695.5" y="528.8" font-size="2.5" fill="#6e6e6e" text-anchor="start" font-style="italic">Масса</text><text x="706.5" y="528.8" font-size="2.5" fill="#6e6e6e" text-anchor="start" font-style="italic">Масштаб</text><text x="700" y="550.5" font-size="2.6" fill="#6e6e6e" text-anchor="middle" font-style="italic">УГТУ им. Шухова</text><text x="700" y="553.7" font-size="2.6" fill="#6e6e6e" text-anchor="middle" font-style="italic">кафедра ЛиО</text><text x="700" y="556.9" font-size="2.6" fill="#6e6e6e" text-anchor="middle" font-style="italic">Группа МТ2-41</text><text x="681" y="545.6" font-size="2.4" fill="#6e6e6e" text-anchor="start" font-style="italic">Лист</text><text x="698" y="545.6" font-size="2.4" fill="#6e6e6e" text-anchor="start" font-style="italic">Листов</text><text x="571" y="533.5" font-size="3.2" fill="#888" text-anchor="start" font-style="italic">Изм.</text><text x="576.5" y="533.5" font-size="3.2" fill="#888" text-anchor="start" font-style="italic">Лист</text><text x="588" y="533.5" font-size="3.2" fill="#888" text-anchor="start" font-style="italic">№ докум.</text><text x="606" y="533.5" font-size="3.2" fill="#888" text-anchor="start" font-style="italic">Подп.</text><text x="616" y="533.5" font-size="3.2" fill="#888" text-anchor="start" font-style="italic">Дата</text><text x="571.5" y="537.5" font-size="3.2" fill="#888" text-anchor="start" font-style="italic">Разраб.</text><text x="571.5" y="541.5" font-size="3.2" fill="#888" text-anchor="start" font-style="italic">Пров.</text><text x="571.5" y="545.5" font-size="3.2" fill="#888" text-anchor="start" font-style="italic">Т.контр.</text><text x="571.5" y="553.5" font-size="3.2" fill="#888" text-anchor="start" font-style="italic">Н.контр.</text><text x="571.5" y="557.5" font-size="3.2" fill="#888" text-anchor="start" font-style="italic">Утв.</text><text x="585" y="537.5" font-size="3.2" fill="#888" text-anchor="start" font-style="italic">Сапрыкин А.</text><text x="585" y="541.5" font-size="3.2" fill="#888" text-anchor="start" font-style="italic">Ерохин Н.В.</text></g></svg></body></html>
